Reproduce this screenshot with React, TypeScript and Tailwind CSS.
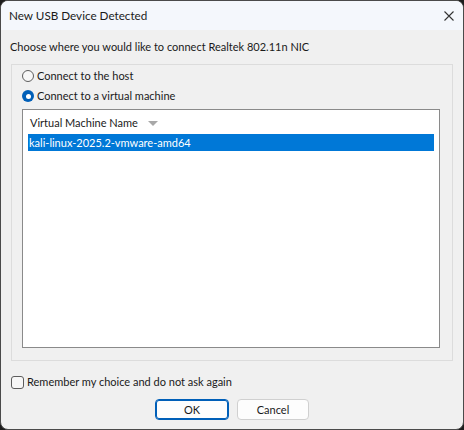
import React from 'react';

const font = { fontFamily: 'Lato, "Noto Sans", sans-serif' };

const Radio: React.FC<{ checked?: boolean; label: string }> = ({ checked, label }) => (
  <div className="flex items-center h-[20px]">
    {checked ? (
      <span className="w-[12px] h-[12px] rounded-full bg-[#005fb8] flex items-center justify-center">
        <span className="w-[5px] h-[5px] rounded-full bg-white" />
      </span>
    ) : (
      <span className="w-[12px] h-[12px] rounded-full border border-[#5d5d5d] bg-[#f7f7f7]" />
    )}
    <span className="ml-[3px] text-[11px] text-[#1a1a1a]">{label}</span>
  </div>
);

export default function App() {
  return (
    <div className="w-[464px] h-[430px] bg-[#1c1c1c] text-[#1a1a1a]" style={font}>
      <div className="w-full h-full rounded-[8px] border border-[#4a4a4a] bg-[#f0f0f0] overflow-hidden flex flex-col">
        {/* title bar */}
        <div className="h-[29px] bg-[#f4f7fc] flex items-center justify-between pl-[8px] pr-[9px]">
          <span className="text-[11.7px] text-[#1a1a1a]">New USB Device Detected</span>
          <svg width="10" height="10" viewBox="0 0 10 10" className="text-[#333]">
            <path d="M0.5 0.5 L9.5 9.5 M9.5 0.5 L0.5 9.5" stroke="currentColor" strokeWidth="1.1" />
          </svg>
        </div>

        <div className="flex flex-col px-[10px]">
          <div className="h-[18px] mt-[8px] text-[11px] leading-[18px] -ml-[1px]">
            Choose where you would like to connect Realtek 802.11n NIC
          </div>

          {/* group box */}
          <div className="mt-[8px] h-[297px] border border-[#dcdcdc] flex flex-col pl-[10px] pr-[12px]">
            <div className="mt-[1px]">
              <Radio label="Connect to the host" />
              <Radio checked label="Connect to a virtual machine" />
            </div>
            <div className="mt-[3px] h-[239px] border border-[#8a8a8a] bg-white flex flex-col px-[5px]">
              <div className="h-[24px] flex items-center pl-[2px] pt-[3px]">
                <span className="text-[11px]">Virtual Machine Name</span>
                <svg width="10" height="6" viewBox="0 0 10 6" className="ml-[10px] mt-[1px]">
                  <path d="M0 0 H10 L5 5 Z" fill="#a8a8a8" />
                </svg>
              </div>
              <div className="h-[17px] bg-[#0078d7] text-white text-[11px] leading-[17px] pl-[1px]">
                kali-linux-2025.2-vmware-amd64
              </div>
            </div>
          </div>

          {/* checkbox */}
          <div className="mt-[14px] flex items-center h-[14px]">
            <span className="w-[13px] h-[13px] rounded-[3px] border border-[#5d5d5d] bg-[#f7f7f7]" />
            <span className="ml-[3px] text-[11px]">Remember my choice and do not ask again</span>
          </div>

          {/* buttons */}
          <div className="mt-[10px] flex justify-center gap-[8px]">
            <button className="w-[74px] h-[21px] rounded-[4px] border border-[#005fb8] bg-[#fdfdfd] text-[11px] leading-none shadow-[inset_0_0_0_1px_#005fb8]">
              OK
            </button>
            <button className="w-[72px] h-[21px] rounded-[4px] border border-[#d0d0d0] bg-[#fdfdfd] text-[11px] leading-none">
              Cancel
            </button>
          </div>
        </div>
      </div>
    </div>
  );
}
